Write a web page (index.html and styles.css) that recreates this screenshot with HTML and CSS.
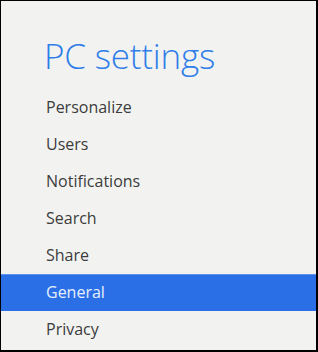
FILE: index.html
```html
<!DOCTYPE html>
<html lang="en">
<head>
  <meta charset="UTF-8" />
  <title>PC settings</title>
  <link rel="stylesheet" href="styles.css">
</head>
<body>
  <div class="panel">
    <h1>PC settings</h1>
    <ul class="menu">
      <li>Personalize</li>
      <li>Users</li>
      <li>Notifications</li>
      <li>Search</li>
      <li>Share</li>
      <li class="active">General</li>
      <li>Privacy</li>
    </ul>
  </div>
</body>
</html>
```

FILE: styles.css
```css
* {
  margin: 0;
  padding: 0;
  box-sizing: border-box;
}

body {
  font-family: 'Open Sans', sans-serif;
  background: #f2f3f1;
  width: 318px;
  height: 352px;
  overflow: hidden;
}

.panel {
  width: 318px;
  height: 352px;
  background: #f2f3f1;
  border-style: solid;
  border-color: #000;
  border-width: 1px 2px 2px 1px;
  overflow: hidden;
}

h1 {
  font-weight: 300;
  font-size: 35px;
  line-height: 40px;
  color: #2f7de8;
  padding: 35px 0 0 43px;
  height: 88px;
  letter-spacing: -0.2px;
}

.menu {
  list-style: none;
}

.menu li {
  height: 37px;
  line-height: 37px;
  padding-left: 45px;
  font-size: 16px;
  color: #3c3c3c;
}

.menu li.active {
  background: #2b6fe7;
  color: #e8f0fd;
  border-top: 1px solid #5a92ef;
  line-height: 35px;
}
```
